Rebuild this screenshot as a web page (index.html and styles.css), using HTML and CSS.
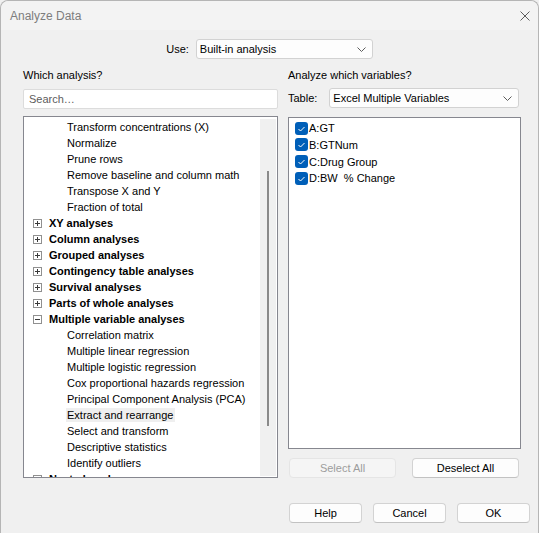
FILE: index.html
```html
<!DOCTYPE html>
<html lang="en">
<head>
  <meta charset="UTF-8">
  <title>Analyze Data</title>
  <link rel="stylesheet" href="styles.css">
</head>
<body>
  <div class="dialog">
    <div class="titlebar">
      <span class="title">Analyze Data</span>
      <svg class="close" width="10" height="10" viewBox="0 0 10 10"><path d="M0.5 0.5L9.5 9.5M9.5 0.5L0.5 9.5" stroke="#5c5c5c" stroke-width="1"/></svg>
    </div>

    <div class="use-row">
      <span>Use:</span>
      <div class="combo combo-use">
        <span>Built-in analysis</span>
        <svg width="9" height="5" viewBox="0 0 9 5"><path d="M0.5 0.5L4.5 4.5L8.5 0.5" fill="none" stroke="#5c5c5c"/></svg>
      </div>
    </div>

    <div class="panes">
      <!-- Which analysis -->
      <div class="pane pane-left">
        <div class="pane-label">Which analysis?</div>
        <div class="search">Search…</div>
        <div class="tree">
          <div class="tree-rows">
            <div class="row child">Transform concentrations (X)</div>
            <div class="row child">Normalize</div>
            <div class="row child">Prune rows</div>
            <div class="row child">Remove baseline and column math</div>
            <div class="row child">Transpose X and Y</div>
            <div class="row child">Fraction of total</div>
            <div class="row parent"><svg width="9" height="9" viewBox="0 0 9 9"><rect x="0.5" y="0.5" width="8" height="8" fill="#fff" stroke="#909090"/><path d="M2 4.5h5M4.5 2v5" stroke="#3a3a3a"/></svg>XY analyses</div>
            <div class="row parent"><svg width="9" height="9" viewBox="0 0 9 9"><rect x="0.5" y="0.5" width="8" height="8" fill="#fff" stroke="#909090"/><path d="M2 4.5h5M4.5 2v5" stroke="#3a3a3a"/></svg>Column analyses</div>
            <div class="row parent"><svg width="9" height="9" viewBox="0 0 9 9"><rect x="0.5" y="0.5" width="8" height="8" fill="#fff" stroke="#909090"/><path d="M2 4.5h5M4.5 2v5" stroke="#3a3a3a"/></svg>Grouped analyses</div>
            <div class="row parent"><svg width="9" height="9" viewBox="0 0 9 9"><rect x="0.5" y="0.5" width="8" height="8" fill="#fff" stroke="#909090"/><path d="M2 4.5h5M4.5 2v5" stroke="#3a3a3a"/></svg>Contingency table analyses</div>
            <div class="row parent"><svg width="9" height="9" viewBox="0 0 9 9"><rect x="0.5" y="0.5" width="8" height="8" fill="#fff" stroke="#909090"/><path d="M2 4.5h5M4.5 2v5" stroke="#3a3a3a"/></svg>Survival analyses</div>
            <div class="row parent"><svg width="9" height="9" viewBox="0 0 9 9"><rect x="0.5" y="0.5" width="8" height="8" fill="#fff" stroke="#909090"/><path d="M2 4.5h5M4.5 2v5" stroke="#3a3a3a"/></svg>Parts of whole analyses</div>
            <div class="row parent"><svg width="9" height="9" viewBox="0 0 9 9"><rect x="0.5" y="0.5" width="8" height="8" fill="#fff" stroke="#909090"/><path d="M2 4.5h5" stroke="#3a3a3a"/></svg>Multiple variable analyses</div>
            <div class="row child">Correlation matrix</div>
            <div class="row child">Multiple linear regression</div>
            <div class="row child">Multiple logistic regression</div>
            <div class="row child">Cox proportional hazards regression</div>
            <div class="row child">Principal Component Analysis (PCA)</div>
            <div class="row child"><span class="selected">Extract and rearrange</span></div>
            <div class="row child">Select and transform</div>
            <div class="row child">Descriptive statistics</div>
            <div class="row child">Identify outliers</div>
            <div class="row parent"><svg width="9" height="9" viewBox="0 0 9 9"><rect x="0.5" y="0.5" width="8" height="8" fill="#fff" stroke="#909090"/><path d="M2 4.5h5M4.5 2v5" stroke="#3a3a3a"/></svg>Nested analyses</div>
          </div>
          <div class="vscroll"><div class="thumb"></div></div>
        </div>
      </div>

      <!-- Variables -->
      <div class="pane pane-right">
        <div class="pane-label">Analyze which variables?</div>
        <div class="table-row">
          <span>Table:</span>
          <div class="combo combo-table">
            <span>Excel Multiple Variables</span>
            <svg width="9" height="5" viewBox="0 0 9 5"><path d="M0.5 0.5L4.5 4.5L8.5 0.5" fill="none" stroke="#5c5c5c"/></svg>
          </div>
        </div>
        <div class="varlist">
          <div class="var"><svg width="13" height="13" viewBox="0 0 13 13"><rect width="13" height="13" rx="3" fill="#005fb8"/><path d="M3.5 7l2 2 4-4" fill="none" stroke="#fff"/></svg>A:GT</div>
          <div class="var"><svg width="13" height="13" viewBox="0 0 13 13"><rect width="13" height="13" rx="3" fill="#005fb8"/><path d="M3.5 7l2 2 4-4" fill="none" stroke="#fff"/></svg>B:GTNum</div>
          <div class="var"><svg width="13" height="13" viewBox="0 0 13 13"><rect width="13" height="13" rx="3" fill="#005fb8"/><path d="M3.5 7l2 2 4-4" fill="none" stroke="#fff"/></svg>C:Drug Group</div>
          <div class="var"><svg width="13" height="13" viewBox="0 0 13 13"><rect width="13" height="13" rx="3" fill="#005fb8"/><path d="M3.5 7l2 2 4-4" fill="none" stroke="#fff"/></svg>D:BW&nbsp; % Change</div>
        </div>
        <div class="list-buttons">
          <button disabled>Select All</button>
          <button>Deselect All</button>
        </div>
      </div>
    </div>

    <div class="footer">
      <button>Help</button>
      <button>Cancel</button>
      <button>OK</button>
    </div>
  </div>
</body>
</html>
```

FILE: styles.css
```css
body {
  margin: 0;
  width: 539px;
  height: 533px;
  overflow: hidden;
  font-family: "Liberation Sans", Arial, sans-serif;
  font-size: 11px;
  color: #000;
  background: #f0f0f0;
}

.dialog {
  box-sizing: border-box;
  height: 533px;
  border: 1px solid #b5b5b5;
  border-bottom: none;
  border-radius: 8px 8px 0 0;
  background: #f0f0f0;
}

.titlebar {
  height: 29px;
  display: flex;
  align-items: center;
  justify-content: space-between;
  padding: 0 8px 0 9px;
  background: #f3f3f3;
  border-radius: 8px 8px 0 0;
}

.title {
  font-size: 12px;
  color: #7d7d7d;
}

.close {
  margin-top: 1px;
}

.use-row {
  margin-top: 9px;
  display: flex;
  justify-content: center;
  align-items: center;
  gap: 7px;
}

.combo {
  box-sizing: border-box;
  height: 20px;
  display: flex;
  align-items: center;
  justify-content: space-between;
  padding: 0 6px 0 3px;
  background: #fdfdfd;
  border: 1px solid #d2d2d2;
  border-radius: 3px;
}

.combo-use {
  width: 177px;
}

.panes {
  margin-top: 8px;
  padding-left: 22px;
  display: flex;
  gap: 10px;
}

.pane {
  display: flex;
  flex-direction: column;
}

.pane-left {
  width: 255px;
}

.pane-right {
  width: 233px;
}

.pane-label {
  height: 16px;
  line-height: 16px;
}

.search {
  box-sizing: border-box;
  margin-top: 6px;
  height: 20px;
  line-height: 18px;
  padding-left: 5px;
  color: #5d5d5d;
  background: #fff;
  border: 1px solid #dcdcdc;
  border-radius: 2px;
}

.tree {
  box-sizing: border-box;
  margin-top: 7px;
  height: 362px;
  display: flex;
  background: #fff;
  border: 1px solid #86878f;
  overflow: hidden;
}

.tree-rows {
  flex: 1;
  padding-top: 2px;
}

.row {
  height: 16px;
  line-height: 16px;
  white-space: nowrap;
}

.child {
  padding-left: 43px;
}

.parent {
  padding-left: 9px;
  font-weight: bold;
  display: flex;
  align-items: center;
}

.parent svg {
  margin-right: 7px;
}

.selected {
  background: #efefef;
  padding: 1px 2px 1px 1px;
  margin-left: -1px;
}

.vscroll {
  width: 16px;
  margin: 2px 1px 1px 0;
  background: #f0f0f0;
  position: relative;
}

.thumb {
  position: absolute;
  left: 7px;
  top: 52px;
  width: 2px;
  height: 255px;
  background: #8a8a8a;
}

.table-row {
  margin-top: 5px;
  display: flex;
  align-items: center;
  gap: 12px;
}

.combo-table {
  flex: 1;
  margin-right: 2px;
}

.varlist {
  box-sizing: border-box;
  margin-top: 9px;
  height: 332px;
  padding: 2px 0 0 6px;
  background: #fff;
  border: 1px solid #86878f;
}

.var {
  height: 16.67px;
  display: flex;
  align-items: center;
  gap: 1px;
}

button {
  box-sizing: border-box;
  height: 20px;
  padding: 0;
  font-family: inherit;
  font-size: 11px;
  color: #000;
  background: #fdfdfd;
  border: 1px solid #d3d3d3;
  border-bottom-color: #c2c2c2;
  border-radius: 4px;
}

button:disabled {
  color: #9d9d9d;
  background: #f5f5f5;
  border-color: #e5e5e5;
}

.list-buttons {
  margin-top: 9px;
  padding: 0 2px 0 1px;
  display: flex;
  gap: 16px;
}

.list-buttons button {
  flex: 1;
}

.footer {
  margin-top: 25px;
  padding-right: 8px;
  display: flex;
  justify-content: flex-end;
  gap: 11px;
}

.footer button {
  width: 73px;
}
```
